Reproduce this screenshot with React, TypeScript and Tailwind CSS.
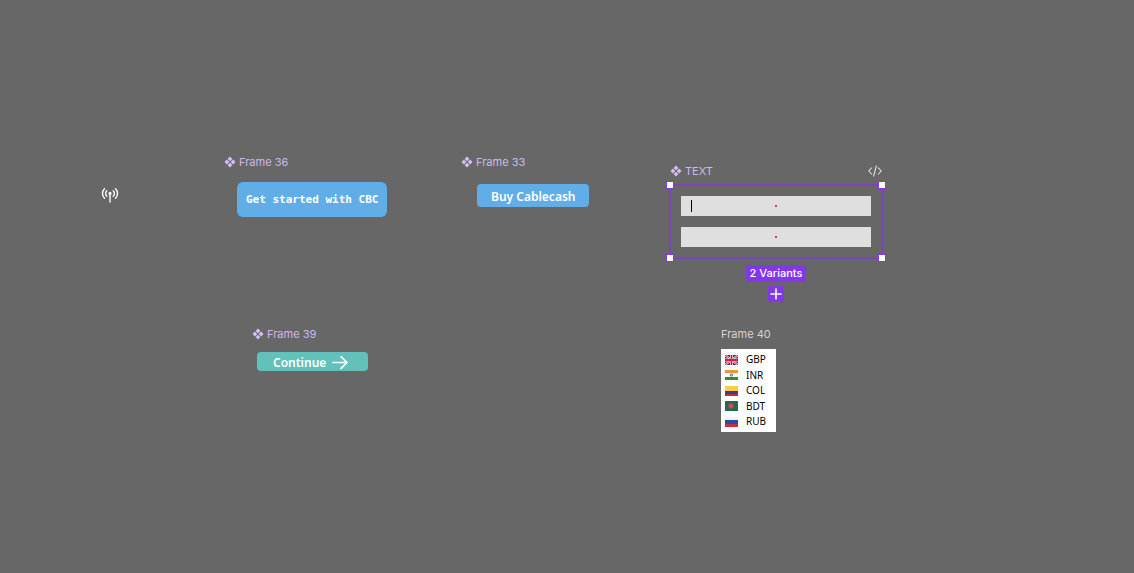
import type { ReactNode } from "react";

function ComponentIcon() {
  return (
    <svg viewBox="0 0 12 12" className="size-3 shrink-0 fill-[#d5c0f5]" aria-hidden="true">
      <path d="M6 .5 8.4 2.9 6 5.3 3.6 2.9ZM6 6.7 8.4 9.1 6 11.5 3.6 9.1ZM2.9 3.6 5.3 6 2.9 8.4.5 6ZM9.1 3.6 11.5 6 9.1 8.4 6.7 6Z" />
    </svg>
  );
}

function ComponentLabel({ children }: { children: ReactNode }) {
  return (
    <div className="flex h-4 items-center gap-[3px] whitespace-nowrap text-[11px] leading-4 text-[#cdb9e9]">
      <ComponentIcon />
      <span>{children}</span>
    </div>
  );
}

function Antenna() {
  return (
    <svg
      viewBox="0 0 18 16"
      className="absolute left-[101px] top-[187px] h-4 w-[18px] fill-none stroke-white"
      strokeWidth="1.4"
      strokeLinecap="round"
      role="img"
      aria-label="Antenna"
    >
      <path d="M3.5 1.8C.8 4.4.8 8.6 3.5 11.2M14.5 1.8c2.7 2.6 2.7 6.8 0 9.4M5.8 3.8c-1.6 1.5-1.6 3.9 0 5.4M12.2 3.8c1.6 1.5 1.6 3.9 0 5.4M9 7v8" />
      <circle cx="9" cy="6.4" r="1.6" className="fill-white stroke-none" />
    </svg>
  );
}

function Flag({ code }: { code: string }) {
  return (
    <svg viewBox="0 0 26 20" className="h-[10px] w-[13px] shrink-0" aria-hidden="true">
      {code === "GBP" && (
        <>
          <path fill="#29337a" d="M0 0h26v20H0z" />
          <path stroke="#fff" strokeWidth="4" d="m0 0 26 20M26 0 0 20" />
          <path stroke="#d32037" strokeWidth="2" d="m0 0 26 20M26 0 0 20" />
          <path stroke="#fff" strokeWidth="6" d="M13 0v20M0 10h26" />
          <path stroke="#d32037" strokeWidth="3.6" d="M13 0v20M0 10h26" />
        </>
      )}
      {code === "INR" && (
        <>
          <path fill="#fff" d="M0 0h26v20H0z" />
          <path fill="#f19437" d="M0 0h26v6H0z" />
          <path fill="#2f8d35" d="M0 14h26v6H0z" />
          <circle cx="13" cy="10" r="2.6" fill="#b9c0dc" stroke="#4b5a91" strokeWidth="1.4" />
        </>
      )}
      {code === "COL" && (
        <>
          <path fill="#f7d046" d="M0 0h26v10H0z" />
          <path fill="#30428a" d="M0 10h26v6H0z" />
          <path fill="#c32a3a" d="M0 16h26v4H0z" />
        </>
      )}
      {code === "BDT" && (
        <>
          <rect width="26" height="20" rx="1" fill="#24694f" />
          <circle cx="12" cy="10" r="5" fill="#e0454c" />
        </>
      )}
      {code === "RUB" && (
        <>
          <path fill="#f2f2f2" d="M0 0h26v6H0z" />
          <path fill="#2b4aa5" d="M0 6h26v8H0z" />
          <path fill="#c92e3c" d="M0 14h26v6H0z" />
        </>
      )}
    </svg>
  );
}

const currencies = ["GBP", "INR", "COL", "BDT", "RUB"];

function Handle() {
  return <span className="size-2 border border-[#8638e5] bg-white" />;
}

function SelectionHandles() {
  return (
    <div className="pointer-events-none absolute -inset-[5px] grid grid-cols-2 content-between [&>*:nth-child(even)]:justify-self-end">
      <Handle />
      <Handle />
      <Handle />
      <Handle />
    </div>
  );
}

function TextVariant({ label, cursor }: { label: string; cursor?: boolean }) {
  return (
    <div className="relative h-5">
      <input
        aria-label={label}
        className="block h-full w-full bg-[#dfdfdf] px-[10px] text-[11px] text-black outline-none"
      />
      <div className="pointer-events-none absolute inset-0 grid grid-cols-[1fr_auto_1fr] items-center px-[10px]">
        <span className={cursor ? "h-3 w-px bg-black" : "h-3 w-px"} />
        <span className="size-[2px] bg-[#cf3c5c]" />
      </div>
    </div>
  );
}

export default function App() {
  return (
    <main className="relative min-h-screen overflow-hidden bg-[#676767] font-['Inter',sans-serif]">
      <Antenna />

      <section className="absolute left-[224px] top-[154px]">
        <ComponentLabel>Frame 36</ComponentLabel>
        <button className="ml-[13px] mt-3 flex h-[35px] items-center rounded-md bg-[#61ade8] px-[9px] pt-[2px] font-['DejaVu_Sans_Mono',monospace] text-[11px] font-bold text-white">
          Get started with CBC
        </button>
      </section>

      <section className="absolute left-[461px] top-[154px]">
        <ComponentLabel>Frame 33</ComponentLabel>
        <button className="ml-4 mt-[14px] flex h-[23px] items-center rounded bg-[#61ade8] px-[14px] pt-[2px] font-['Noto_Sans',sans-serif] text-[12px] font-semibold text-white">
          Buy Cablecash
        </button>
      </section>

      <section className="absolute left-[252px] top-[326px]">
        <ComponentLabel>Frame 39</ComponentLabel>
        <button className="ml-[5px] mt-[10px] flex h-[19px] items-center gap-[6px] rounded bg-[#62c1ba] pl-4 pr-5 pt-[2px] font-['Noto_Sans',sans-serif] text-[12px] font-semibold text-white">
          Continue
          <svg viewBox="0 0 16 14" className="h-[14px] w-4 fill-none stroke-white" strokeWidth="1.7" strokeLinecap="round" strokeLinejoin="round" aria-hidden="true">
            <path d="M1 6.5h14M9 .7l6 5.8-6 5.8" />
          </svg>
        </button>
      </section>

      <section className="absolute left-[669px] top-[163px] w-[214px]">
        <div className="flex items-center justify-between px-px">
          <ComponentLabel>TEXT</ComponentLabel>
          <svg viewBox="0 0 14 12" className="h-3 w-[14px] fill-none stroke-[#dedede]" strokeWidth="1.1" aria-hidden="true">
            <path d="M4 2.5.8 6 4 9.5M10 2.5 13.2 6 10 9.5M8.4.5 5.6 11.5" />
          </svg>
        </div>
        <div className="relative mt-[5px] flex flex-col gap-[11px] border-2 border-[#7c45bd] p-[10px]">
          <TextVariant label="Text, focused" cursor />
          <TextVariant label="Text, empty" />
          <SelectionHandles />
        </div>
        <div className="mt-[6px] flex flex-col items-center gap-1">
          <span className="rounded-xs bg-[#8038e8] px-1 text-[11px] font-medium leading-[17px] text-white">2 Variants</span>
          <button aria-label="Add variant" className="flex size-4 items-center justify-center rounded-xs bg-[#8038e8]">
            <svg viewBox="0 0 12 12" className="size-3 stroke-white" strokeWidth="1.6" aria-hidden="true">
              <path d="M6 .5v11M.5 6h11" />
            </svg>
          </button>
        </div>
      </section>

      <section className="absolute left-[721px] top-[326px]">
        <h2 className="whitespace-nowrap text-[11px] leading-4 text-[#d4d4d4]">Frame 40</h2>
        <ul className="mt-[7px] flex h-[83px] w-[55px] flex-col justify-between bg-white py-[3px] pl-1 font-['Noto_Sans',sans-serif] text-[10px] leading-[15px] text-black">
          {currencies.map((code) => (
            <li key={code} className="flex items-center gap-2">
              <Flag code={code} />
              {code}
            </li>
          ))}
        </ul>
      </section>
    </main>
  );
}
